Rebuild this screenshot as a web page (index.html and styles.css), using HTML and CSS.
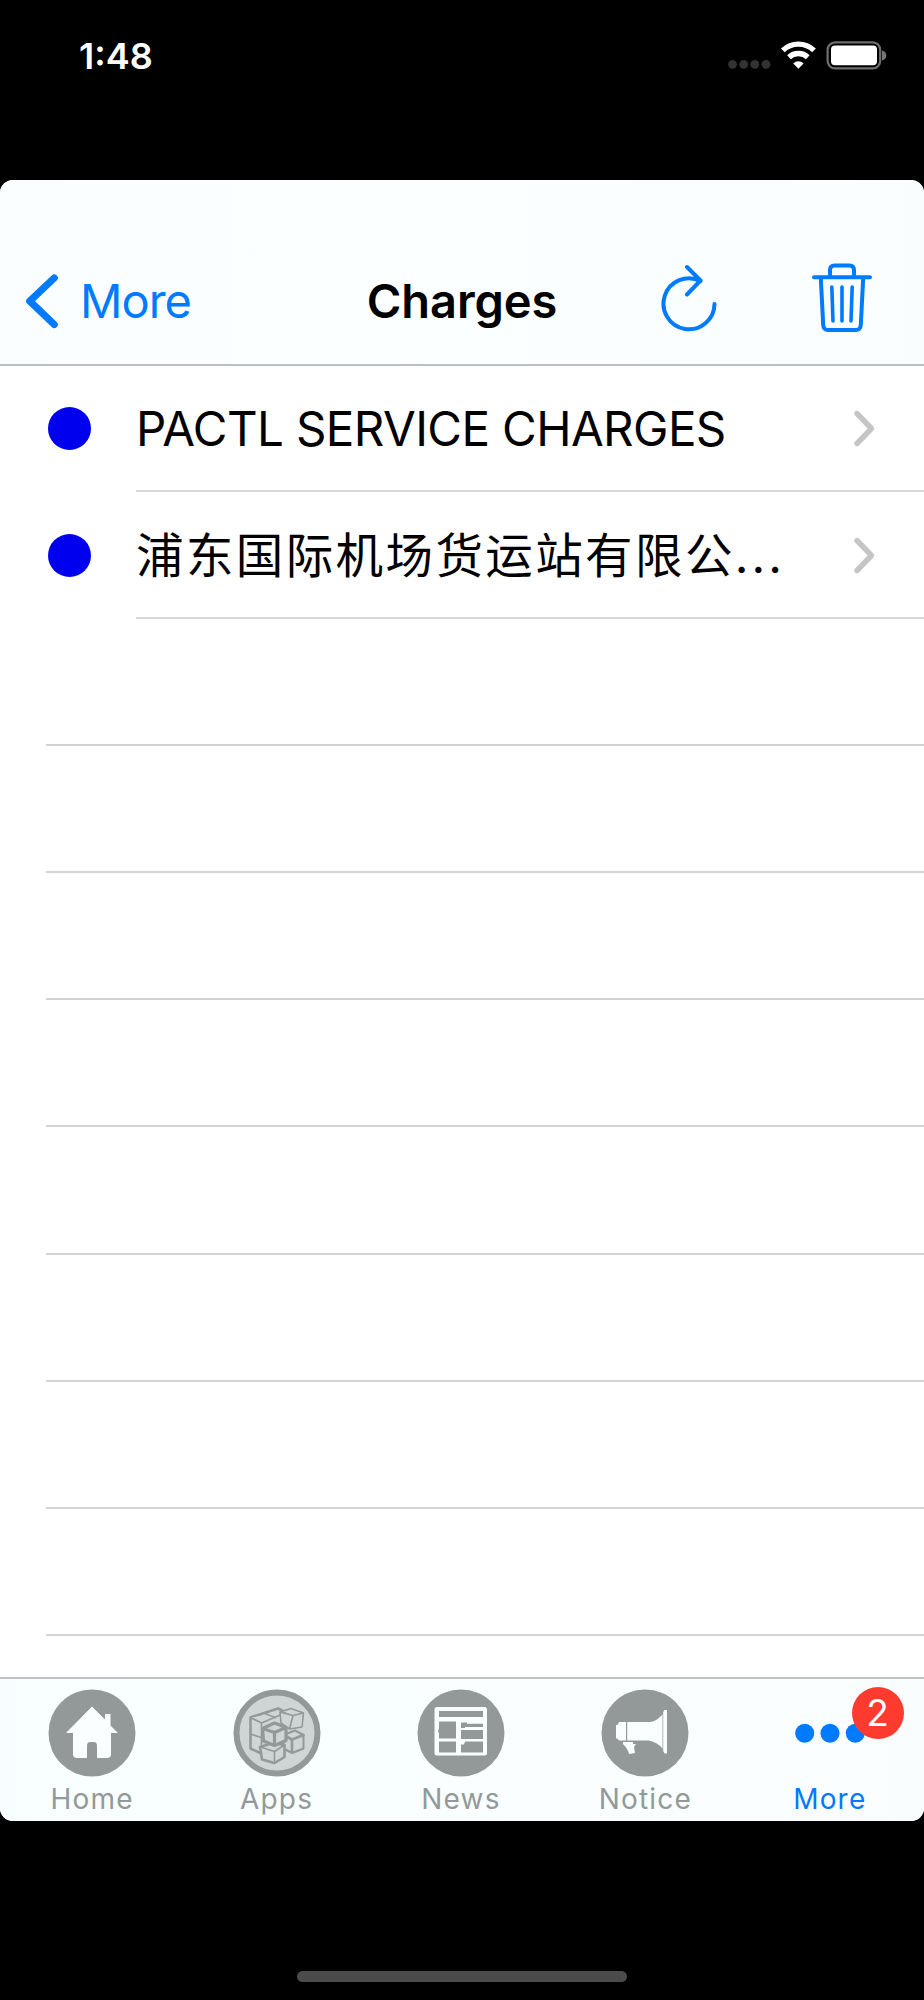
FILE: index.html
```
<!DOCTYPE html>
<html lang="en">
<head>
<meta charset="utf-8">
<title>Charges</title>
<link rel="stylesheet" href="styles.css">
</head>
<body>
<div class="phone">
  <header class="status">
    <span class="time">1:48</span>
    <svg class="status-icons" width="170" height="40" viewBox="0 0 170 40">
      <g fill="#333"><circle cx="8.5" cy="24.3" r="4.4"/><circle cx="19.7" cy="24.3" r="4.4"/><circle cx="30.8" cy="24.3" r="4.4"/><circle cx="42" cy="24.3" r="4.4"/></g>
      <g fill="none" stroke="#fff" stroke-width="5.4"><path d="M58.8 10.4a22.5 22.5 0 0 1 31.2 0"/><path d="M65 17.2a13.7 13.7 0 0 1 18.8 0"/></g>
      <path d="M74.4 28.8l-5.2-5.4a7.5 7.5 0 0 1 10.4 0z" fill="#fff"/>
      <rect x="103.6" y="2.4" width="52.6" height="26" rx="7.5" fill="none" stroke="#6e6e6e" stroke-width="2.2"/>
      <rect x="107" y="5.6" width="46" height="19.6" rx="4" fill="#fff"/>
      <path d="M158 10.5q4.3 1.2 4.3 5t-4.3 5z" fill="#777"/>
    </svg>
  </header>
  <main class="card">
    <nav class="nav">
      <a class="back">
        <svg width="36" height="60" viewBox="0 0 36 60"><path d="M29.2 7L4.8 30.2L29.2 53.5" fill="none" stroke="#007aff" stroke-width="7.2" stroke-linecap="round" stroke-linejoin="round"/></svg>
        <span>More</span>
      </a>
      <h1 class="title">Charges</h1>
      <div class="actions">
        <svg width="58" height="70" viewBox="0 0 58 70" fill="none" stroke="#007aff" stroke-width="4" stroke-linecap="round" stroke-linejoin="round"><path d="M54.5 40A25.5 25.5 0 1 1 40.500 17M27 3l13.500 13.500L27 30.500"/></svg>
        <svg width="62" height="72" viewBox="0 0 62 72" fill="none" stroke="#007aff" stroke-width="4" stroke-linecap="round" stroke-linejoin="round"><path d="M3 14.300h56M19 14V7q0-4.500 4.500-4.500h15q4.500 0 4.500 4.500v7M9.800 15l2.400 47q.3 5 5 5h27.600q4.700 0 5-5l2.400-47"/><path stroke-width="3.600" d="M20.800 24l1.200 34M31 24v34M41.200 24L40 58"/></svg>
      </div>
    </nav>
    <ul class="list">
      <li class="row item">
        <span class="dot"></span>
        <div class="cell"><span class="latin">PACTL SERVICE CHARGES</span>
          <svg class="chev" width="24" height="40" viewBox="0 0 24 40"><path d="M4 5.500L18.500 20.500L4 35.500"/></svg></div>
      </li>
      <li class="row item">
        <span class="dot"></span>
        <div class="cell"><span class="cjk" lang="zh-CN">浦东国际机场货运站有限公<span class="more-dots">...</span></span>
          <svg class="chev" width="24" height="40" viewBox="0 0 24 40"><path d="M4 5.500L18.500 20.500L4 35.500"/></svg></div>
      </li>
      <li class="row empty"></li>
      <li class="row empty"></li>
      <li class="row empty"></li>
      <li class="row empty"></li>
      <li class="row empty"></li>
      <li class="row empty"></li>
      <li class="row empty"></li>
      <li class="row empty"></li>
    </ul>
    <footer class="tabs">
      <a class="tab">
        <svg width="88" height="88" viewBox="0 0 88 88"><circle cx="44" cy="44" r="43.500" fill="#939999"/><path fill="#fafeff" d="M44 17.500L57 30.500V25h5.500v11.500L70 44h-7v21q0 4-4 4H49V57q0-4-3-4h-4q-3 0-3 4v12H29q-4 0-4-4V44h-7z"/></svg>
        <span>Home</span>
      </a>
      <a class="tab">
        <svg width="88" height="88" viewBox="0 0 88 88"><circle cx="44" cy="44" r="40.500" fill="#cfd5d5" stroke="#939999" stroke-width="6"/>
          <g fill="#cfd5d5" stroke="#939999" stroke-width="1.600" stroke-linejoin="round">
            <path stroke-width="2.600" d="M17.500 28.500L45 19.500L52 23V50L28 64.500L17.500 59.500z"/><path d="M17.500 28.500l11 5.500L52 24M31 24l12 5M17.500 45l12 4M28.500 34v30"/>
            <path d="M47 23L58 19.500L70.500 24L69 38L56.500 40L48 34zM47 23l13 3.500L70.500 24M60 26.500L56.500 40"/>
            <path stroke-width="2" d="M50.500 46L62 41.500L70.500 46V59.500L59 64L50.500 59.500z"/><path stroke-width="2.600" d="M50.500 46l8.500 4.500 11.500-4.500L59 50.500V64"/>
            <path stroke-width="2.600" d="M27 58L40 54L51.500 56V68L41.500 74L29 70.500z"/><path d="M27 58l14.500 4.500L51.500 56L41.500 62.500V74"/>
            <path stroke-width="3.200" d="M29.500 39.500L41.500 34L53 38.500V51.500L41.500 56.500L30.500 52z"/><path fill="none" stroke-width="3.200" d="M29.500 39.500L41.500 43.500L53 38.500M41.500 43.500v13"/>
          </g></svg>
        <span>Apps</span>
      </a>
      <a class="tab">
        <svg width="88" height="88" viewBox="0 0 88 88"><circle cx="44" cy="44" r="43.500" fill="#939999"/><rect x="17.500" y="18" width="52.500" height="48.500" rx="2.500" fill="#fafeff"/><g fill="#939999"><path d="M22 22h44v6H22zM22 32.500h17v17H22v-5l-1-2 1-3zM22 52.500h17v11H22zM44 33.500h6v1.200h16V38H48v1h-4zM44 41h22v9H44zM48 52.500h18v11H44v-8h3z"/></g></svg>
        <span>News</span>
      </a>
      <a class="tab">
        <svg width="88" height="88" viewBox="0 0 88 88"><circle cx="44" cy="44" r="43.500" fill="#939999"/><g fill="#fafeff"><path d="M18 33h7v18.500h-7l-1.500-2h-1.500V36h1.500zM26.200 33h23q6.800-1 12.300-7.500v34q-5.500-6.500-14-8H26.200zM62.200 23l1.300-2H66v43.500h-2.500L62.200 62z"/><path d="M22 53h10v2h3l-2 3 1 6-6 1q-1-5-6-10z"/></g></svg>
        <span>Notice</span>
      </a>
      <a class="tab active">
        <svg width="88" height="88" viewBox="0 0 88 88"><g fill="#007aff"><circle cx="18.700" cy="44.300" r="9.500"/><circle cx="44" cy="44.300" r="9.500"/><circle cx="69.300" cy="44.300" r="9.500"/></g></svg>
        <span>More</span>
        <b class="badge">2</b>
      </a>
    </footer>
  </main>
  <div class="home-indicator"></div>
</div>
</body>
</html>
```
FILE: styles.css
```
* { box-sizing: border-box; }
body { margin: 0; background: #000; font-family: Inter, "Noto Sans CJK SC", sans-serif; }
.phone { width: 924px; height: 2000px; display: flex; flex-direction: column; align-items: center; background: #000; overflow: hidden; }
.status { width: 100%; height: 179.5px; flex: none; display: flex; justify-content: space-between; align-items: flex-start; padding: 36px 30px 0 79px; color: #fff; }
.time { font-size: 36px; line-height: 40px; font-weight: 600; letter-spacing: 0; }
.status-icons { margin-top: 4px; }
.card { width: 924px; height: 1641px; flex: none; border-radius: 13px; overflow: hidden; background: #fff; display: flex; flex-direction: column; }
.nav { height: 186.5px; flex: none; padding-top: 58px; display: grid; grid-template-columns: 1fr auto 1fr; align-items: center; background: linear-gradient(90deg, #fafeff, #fcffff 45%, #fafdfe); border-bottom: 2px solid #bcbfc0; }
.back { display: flex; align-items: center; gap: 19px; padding-left: 25px; font-size: 47px; color: #007aff; letter-spacing: -1px; }
.title { margin: 0; font-size: 47px; line-height: 60px; font-weight: 600; letter-spacing: -.1px; color: #000; }
.actions { display: flex; justify-content: flex-end; align-items: center; gap: 93px; padding: 0 51px 3px 0; }
.list { list-style: none; margin: 0; padding: 0; height: 1311px; flex: none; overflow: hidden; }
.row { height: 127.1px; }
.row:first-child { height: 126px; }
.item { display: flex; align-items: center; padding-left: 48px; }
.dot { width: 43px; height: 43px; flex: none; border-radius: 50%; background: #0000ee; margin: 0 45px 1px 0; }
.cell { flex: 1; height: 100%; display: flex; align-items: center; justify-content: space-between; border-bottom: 2px solid #d8d8d8; padding-right: 47px; white-space: nowrap; }
.latin { font-size: 47.5px; letter-spacing: -.6px; }
.cjk { font-family: "Noto Sans CJK SC", sans-serif; font-size: 47.5px; line-height: 60px; letter-spacing: 2.4px; }
.more-dots { font-family: Inter, sans-serif; letter-spacing: 3px; }
.chev { fill: none; stroke: #c5c5c7; stroke-width: 5.4; stroke-linecap: round; stroke-linejoin: round; }
.empty { margin-left: 46px; border-bottom: 2px solid #d3d3d3; }
.tabs { flex: 1; display: grid; grid-template-columns: repeat(5, 1fr); padding-right: 2px; background: linear-gradient(90deg, #f8feff, #fafeff 50%, #fafdfe); border-top: 2px solid #bfc2c3; }
.tab { position: relative; display: flex; flex-direction: column; align-items: center; padding-top: 10px; font-size: 28px; line-height: 34px; font-weight: 400; letter-spacing: 1.2px; color: #939999; }
.tab svg { display: block; margin-bottom: 5px; }
.active { color: #007aff; }
.badge { position: absolute; left: 114px; top: 8px; width: 52px; height: 52px; border-radius: 50%; background: #ff3b30; color: #fff; font-size: 37px; line-height: 52px; font-weight: 400; letter-spacing: 0; text-align: center; }
.home-indicator { width: 330px; height: 11px; flex: none; margin-top: 150.5px; border-radius: 6px; background: #4b4b4b; }
```
